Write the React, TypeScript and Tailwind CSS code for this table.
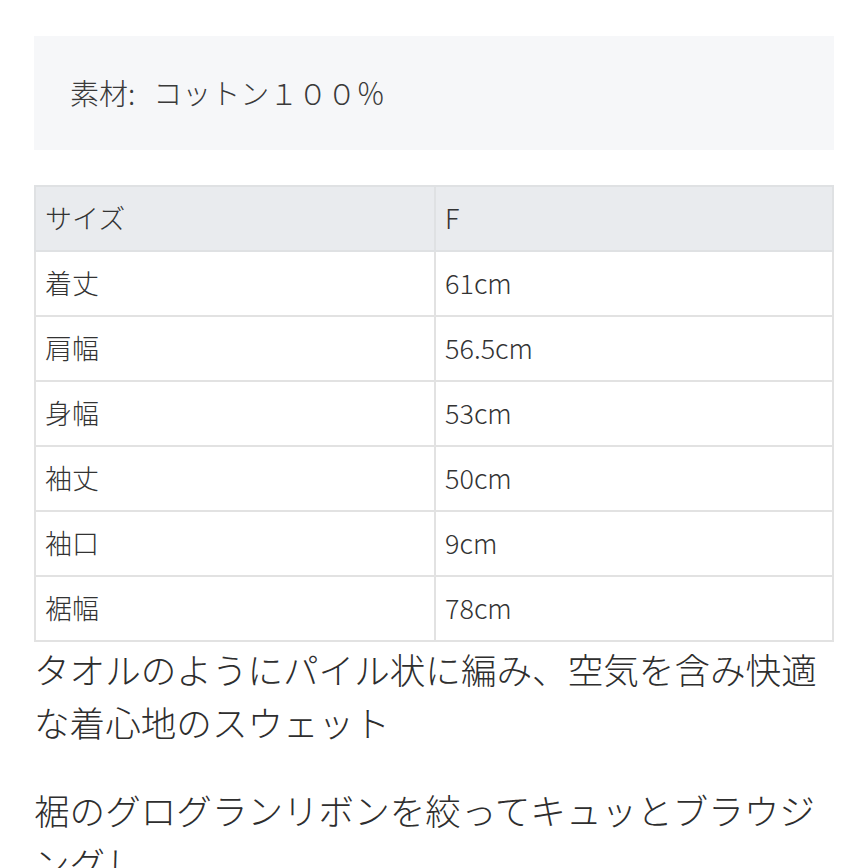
const rows: [string, string][] = [
  ["着丈", "61cm"],
  ["肩幅", "56.5cm"],
  ["身幅", "53cm"],
  ["袖丈", "50cm"],
  ["袖口", "9cm"],
  ["裾幅", "78cm"],
];

export default function App() {
  return (
    <div className="w-[868px] h-[868px] overflow-hidden bg-white text-[#333] font-['Noto_Sans_CJK_JP','Noto_Sans',sans-serif] font-light">
      <div className="pt-9 px-[34px]">
        <div className="h-[114px] bg-[#f6f7f9] flex items-center px-9 text-[29px] text-[#3a3a3a]">
          素材:<span className="ml-[18px]">コットン１００％</span>
        </div>
        <table className="mt-[35px] w-[800px] border-collapse text-[27px] table-fixed">
          <tbody>
            <tr className="h-[65px] bg-[#e9ebee]">
              <td className="w-[400px] border-2 border-[#dfe1e3] px-[9px]">サイズ</td>
              <td className="border-2 border-[#dfe1e3] px-[9px]">F</td>
            </tr>
            {rows.map(([k, v]) => (
              <tr key={k} className="h-[65px]">
                <td className="border-2 border-[#e2e2e2] px-[9px]">{k}</td>
                <td className="border-2 border-[#e2e2e2] px-[9px]">{v}</td>
              </tr>
            ))}
          </tbody>
        </table>
        <p className="text-[35.6px] leading-[53px] text-[#2e2e2e]">
          タオルのようにパイル状に編み、空気を含み快適な着心地のスウェット
        </p>
        <p className="mt-[35px] text-[35.6px] leading-[53px] text-[#2e2e2e]">
          裾のグログランリボンを絞ってキュッとブラウジングし
        </p>
      </div>
    </div>
  );
}
